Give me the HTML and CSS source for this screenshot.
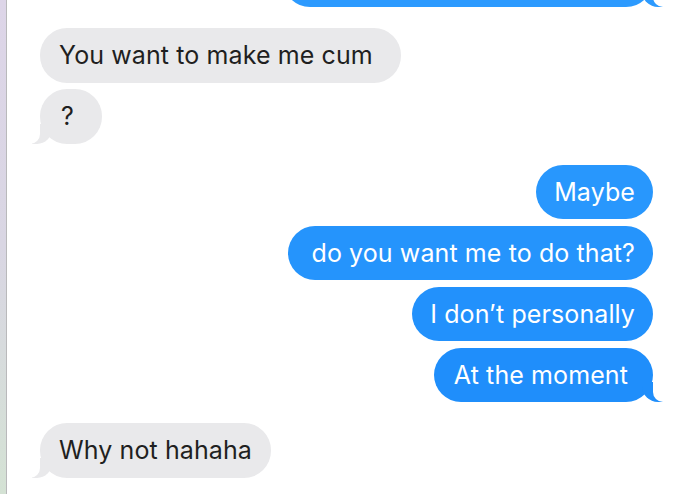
FILE: index.html
```html
<!DOCTYPE html>
<html lang="en">
<head>
<meta charset="utf-8">
<title>Messages</title>
<link rel="stylesheet" href="styles.css">
</head>
<body>
<div class="window">
  <div class="sidebar-edge"></div>
  <main class="chat">
    <div class="group sent first">
      <div class="bubble blue top-blue tail"></div>
    </div>
    <div class="group recv">
      <div class="bubble gray roomy">You want to make me cum</div>
      <div class="bubble gray short tail">?</div>
    </div>
    <div class="group sent">
      <div class="bubble blue b1">Maybe</div>
      <div class="bubble blue b2 loose">do you want me to do that?</div>
      <div class="bubble blue b3">I don’t personally</div>
      <div class="bubble blue b4 roomy tail">At the moment</div>
    </div>
    <div class="group recv">
      <div class="bubble gray tail">Why not hahaha</div>
    </div>
  </main>
</div>
</body>
</html>
```
FILE: styles.css
```css
html, body {
  margin: 0;
  padding: 0;
  background: #ffffff;
  height: 100%;
  overflow: hidden;
}

.window {
  display: flex;
  height: 494px;
}

.sidebar-edge {
  width: 6px;
  flex: 0 0 6px;
  background: linear-gradient(to bottom, #ddd5e8 0%, #d9d6e3 50%, #d4e2d4 100%);
  border-right: 1px solid #b9b9bb;
}

.chat {
  flex: 1;
  display: flex;
  flex-direction: column;
  gap: 21px;
  padding: 0 27px 0 33px;
  font-family: Inter, "Helvetica Neue", "Liberation Sans", sans-serif;
  font-size: 25px;
  letter-spacing: 0.1px;
}

.group {
  display: flex;
  flex-direction: column;
  gap: 6px;
}

.group.sent {
  align-items: flex-end;
  gap: 7px;
}

.group.recv {
  align-items: flex-start;
}

.group.first {
  margin-top: -47px;
}

.bubble {
  position: relative;
  height: 54px;
  box-sizing: border-box;
  line-height: 54px;
  padding: 0 19px;
  border-radius: 27px;
  white-space: nowrap;
}

.gray {
  background: #e9e9eb;
  color: #1f1f21;
  height: 55px;
  line-height: 55px;
}

.gray.short {
  min-width: 62px;
  padding-left: 21px;
}

.blue {
  background: #208ffb;
  color: #ffffff;
  padding: 0 18px;
}

.bubble.roomy { padding-right: 28px; }
.bubble.loose { padding-left: 23px; }
.blue.roomy { padding-left: 20px; padding-right: 25px; }

.top-blue { background: #2c9afe; width: 370px; }
.b1 { background: #2897fd; }
.b2 { background: #2594fc; }
.b3 { background: #2291fc; }
.b4 { background: #1f8efb; }

.bubble.tail::before,
.bubble.tail::after {
  content: "";
  position: absolute;
  bottom: 0;
  height: 20px;
}

.gray.tail::before {
  left: -8px;
  width: 20px;
  background: #e9e9eb;
  border-bottom-right-radius: 15px;
  z-index: 0;
}

.gray.tail::after {
  left: -10px;
  width: 10px;
  background: #ffffff;
  border-bottom-right-radius: 10px;
  z-index: 1;
}

.blue.tail::before {
  right: -10px;
  width: 21px;
  background: inherit;
  border-bottom-left-radius: 16px;
  z-index: 0;
}

.blue.tail::after {
  right: -12px;
  width: 12px;
  background: #ffffff;
  border-bottom-left-radius: 10px;
  z-index: 1;
}
```
